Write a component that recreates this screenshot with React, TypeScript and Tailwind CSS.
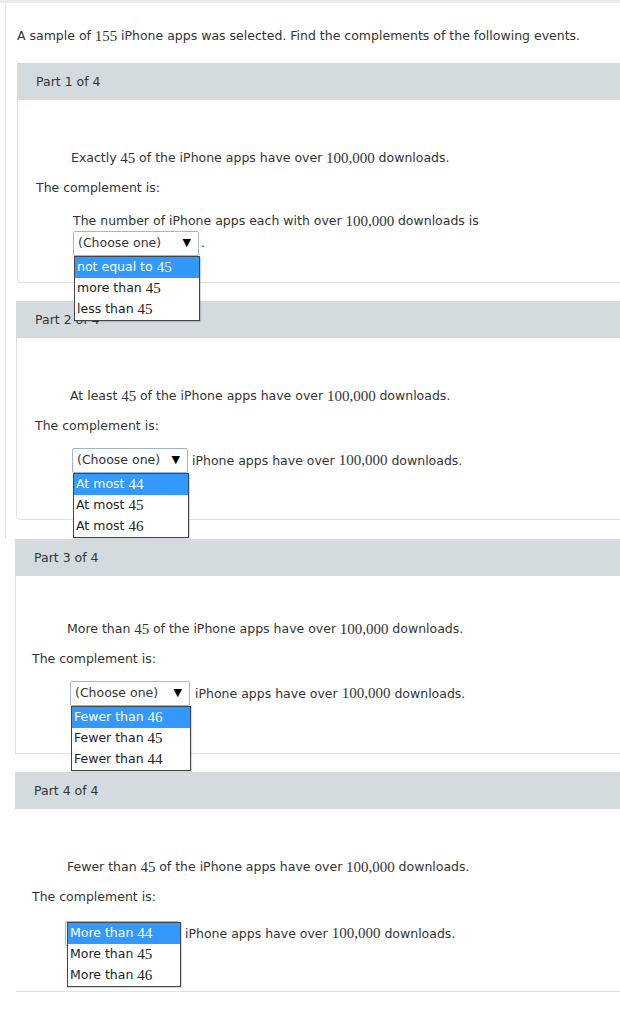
import type { ReactNode } from "react";

const sans = "font-['DejaVu_Sans','Verdana',sans-serif]";

function N({ children }: { children: ReactNode }) {
  return (
    <span className="font-['Liberation_Serif','Times_New_Roman',serif] text-[15px]">
      {children}
    </span>
  );
}

function Dropdown({
  options,
  width,
  covering = false,
}: {
  options: ReactNode[];
  width: string;
  covering?: boolean;
}) {
  return (
    <div className="relative inline-block align-middle">
      <div
        className={`flex h-[25px] ${width} items-center justify-between rounded-[2px] border border-[#9fb6d3] bg-white pl-[4px] pr-[7px] text-[12.5px] text-[#333]`}
      >
        <span className={covering ? "invisible" : ""}>(Choose one)</span>
        <span className="text-[11px] text-black">▼</span>
      </div>
      <div
        className={`absolute z-10 ${covering ? "left-[2px] top-[1px]" : "left-[1px] top-full"} ${width} border border-[#444] bg-white shadow-[1px_1px_1px_rgba(0,0,0,0.15)]`}
      >
        {options.map((o, i) => (
          <div
            key={i}
            className={`flex h-[21px] items-center px-[2px] text-[12.5px] ${
              i === 0 ? "bg-[#3399ff] text-white" : "text-[#222]"
            }`}
          >
            {o}
          </div>
        ))}
      </div>
    </div>
  );
}

function Header({ label, ml }: { label: string; ml: string }) {
  return (
    <div
      className={`${ml} flex h-[37px] items-center bg-[#d4dbde] pl-[19px] pt-[1px] text-[12.5px] text-[#333]`}
    >
      {label}
    </div>
  );
}

export default function App() {
  return (
    <div className={`${sans} min-h-[1024px] w-[620px] bg-white text-[12.5px] text-[#333]`}>
      <div className="h-[3px] bg-[#e6eaec]" />

      {/* upper block with outer left border */}
      <div className="ml-[5px] border-l border-[#e4e4e4] pb-[19px]">
        <div className="flex h-[60px] items-center pl-[11px] pt-[6px]">
          A sample of <N>&nbsp;155&nbsp;</N> iPhone apps was selected. Find the complements of the following events.
        </div>

        {/* Part 1 */}
        <Header label="Part 1 of 4" ml="ml-[11px]" />
        <div className="relative z-10 ml-[11px] h-[183px] rounded-bl-[4px] border-b border-l border-[#e2e2e2] pt-[48px]">
          <div className="flex h-[21px] items-center pl-[53px]">
            Exactly <N>&nbsp;45&nbsp;</N> of the iPhone apps have over <N>&nbsp;100,000&nbsp;</N> downloads.
          </div>
          <div className="mt-[9px] flex h-[21px] items-center pl-[18px]">The complement is:</div>
          <div className="mt-[12px] flex h-[21px] items-center pl-[55px]">
            The number of iPhone apps each with over <N>&nbsp;100,000&nbsp;</N> downloads is
          </div>
          <div className="mt-[-1px] flex items-center pl-[55px]">
            <Dropdown
              width="w-[126px]"
              options={[
                <>not equal to&nbsp;<N>45</N></>,
                <>more than&nbsp;<N>45</N></>,
                <>less than&nbsp;<N>45</N></>,
              ]}
            />
            <span className="ml-[2px]">.</span>
          </div>
        </div>

        {/* Part 2 */}
        <div className="mt-[18px]">
          <Header label="Part 2 of 4" ml="ml-[10px]" />
          <div className="relative z-10 ml-[10px] h-[182px] rounded-bl-[4px] border-b border-l border-[#e2e2e2] pt-[48px]">
            <div className="flex h-[21px] items-center pl-[53px]">
              At least <N>&nbsp;45&nbsp;</N> of the iPhone apps have over <N>&nbsp;100,000&nbsp;</N> downloads.
            </div>
            <div className="mt-[9px] flex h-[21px] items-center pl-[18px]">The complement is:</div>
            <div className="mt-[11px] flex items-center pl-[55px]">
              <Dropdown
                width="w-[116px]"
                options={[
                  <>At most&nbsp;<N>44</N></>,
                  <>At most&nbsp;<N>45</N></>,
                  <>At most&nbsp;<N>46</N></>,
                ]}
              />
              <span className="ml-[4px]">
                iPhone apps have over <N>100,000</N> downloads.
              </span>
            </div>
          </div>
        </div>
      </div>

      {/* Part 3 */}
      <div className="ml-[15px]">
        <Header label="Part 3 of 4" ml="ml-0" />
        <div className="relative z-10 h-[178px] border-b border-l border-[#e2e2e2] pt-[43px]">
          <div className="flex h-[21px] items-center pl-[51px]">
            More than <N>&nbsp;45&nbsp;</N> of the iPhone apps have over <N>&nbsp;100,000&nbsp;</N> downloads.
          </div>
          <div className="mt-[9px] flex h-[21px] items-center pl-[16px]">The complement is:</div>
          <div className="mt-[11px] flex items-center pl-[54px]">
            <Dropdown
              width="w-[120px]"
              options={[
                <>Fewer than&nbsp;<N>46</N></>,
                <>Fewer than&nbsp;<N>45</N></>,
                <>Fewer than&nbsp;<N>44</N></>,
              ]}
            />
            <span className="ml-[5px]">
              iPhone apps have over <N>100,000</N> downloads.
            </span>
          </div>
        </div>
      </div>

      {/* Part 4 */}
      <div className="ml-[15px] mt-[18px]">
        <Header label="Part 4 of 4" ml="ml-0" />
        <div className="ml-[1px] h-[183px] border-b border-[#e2e2e2] pt-[48px]">
          <div className="flex h-[21px] items-center pl-[51px]">
            Fewer than <N>&nbsp;45&nbsp;</N> of the iPhone apps have over <N>&nbsp;100,000&nbsp;</N> downloads.
          </div>
          <div className="mt-[9px] flex h-[21px] items-center pl-[16px]">The complement is:</div>
          <div className="mt-[13px] flex items-center pl-[49px]">
            <Dropdown
              width="w-[114px]"
              covering
              options={[
                <>More than&nbsp;<N>44</N></>,
                <>More than&nbsp;<N>45</N></>,
                <>More than&nbsp;<N>46</N></>,
              ]}
            />
            <span className="ml-[6px]">
              iPhone apps have over <N>100,000</N> downloads.
            </span>
          </div>
        </div>
      </div>
    </div>
  );
}
